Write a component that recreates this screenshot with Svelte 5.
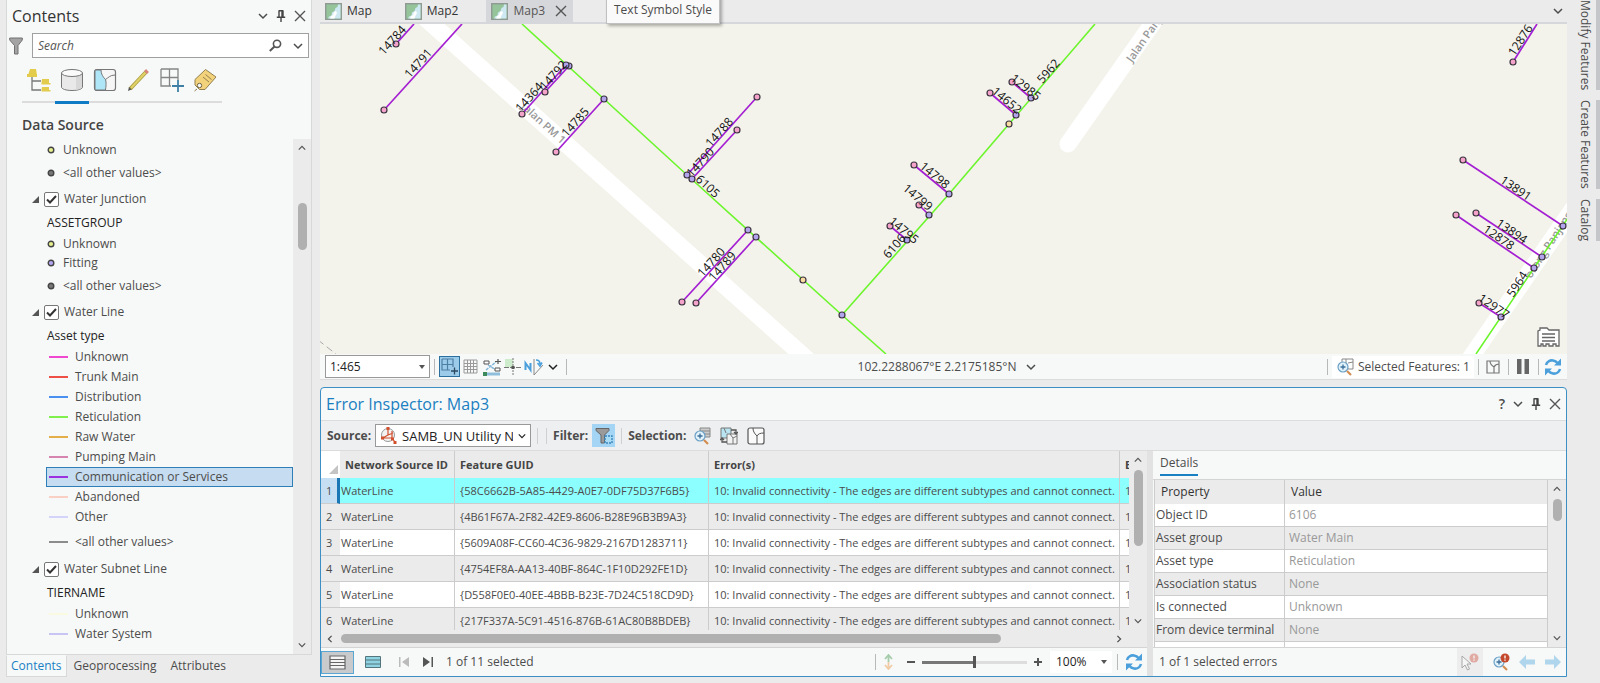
<script>
    let search = '';
    let activeTab = 'Map3';
    let activePane = 'Contents';
    let selectedRow = 1;
    let zoom = 50;

    const mapTabs = ['Map', 'Map2', 'Map3'];
    const paneTabs = ['Contents', 'Geoprocessing', 'Attributes'];
    const sideTabs = ['Modify Features', 'Create Features', 'Catalog'];

    let legend = [
        { type: 'point', label: 'Unknown', color: '#e6f08c' },
        { type: 'point', label: '<all other values>', color: '#777777', other: true },
        { type: 'layer', label: 'Water Junction', checked: true },
        { type: 'field', label: 'ASSETGROUP' },
        { type: 'point', label: 'Unknown', color: '#e6f08c' },
        { type: 'point', label: 'Fitting', color: '#b4a5f0' },
        { type: 'point', label: '<all other values>', color: '#777777', other: true },
        { type: 'layer', label: 'Water Line', checked: true },
        { type: 'field', label: 'Asset type' },
        { type: 'line', label: 'Unknown', color: '#f048d0' },
        { type: 'line', label: 'Trunk Main', color: '#ee5048' },
        { type: 'line', label: 'Distribution', color: '#4a90f0' },
        { type: 'line', label: 'Reticulation', color: '#80f04c' },
        { type: 'line', label: 'Raw Water', color: '#e4ae48' },
        { type: 'line', label: 'Pumping Main', color: '#d684b0' },
        { type: 'line', label: 'Communication or Services', color: '#9c30e0', selected: true },
        { type: 'line', label: 'Abandoned', color: '#fad0c4' },
        { type: 'line', label: 'Other', color: '#d4d4fa' },
        { type: 'line', label: '<all other values>', color: '#8c8c8c', other: true },
        { type: 'layer', label: 'Water Subnet Line', checked: true },
        { type: 'field', label: 'TIERNAME' },
        { type: 'line', label: 'Unknown', color: '#fafae0' },
        { type: 'line', label: 'Water System', color: '#c8c4f4' }
    ];

    const message = '10: Invalid connectivity - The edges are different subtypes and cannot connect.';
    const errors = [
        '{58C6662B-5A85-4429-A0E7-0DF75D37F6B5}',
        '{4B61F67A-2F82-42E9-8606-B28E96B3B9A3}',
        '{5609A08F-CC60-4C36-9829-2167D1283711}',
        '{4754EF8A-AA13-40BF-864C-1F10D292FE1D}',
        '{D558F0E0-40EE-4BBB-B23E-7D24C518CD9D}',
        '{217F337A-5C91-4516-876B-61AC80B8BDEB}'
    ];

    const details = [
        ['Object ID', '6106'],
        ['Asset group', 'Water Main'],
        ['Asset type', 'Reticulation'],
        ['Association status', 'None'],
        ['Is connected', 'Unknown'],
        ['From device terminal', 'None'],
        ['', '']
    ];

    // service lines: x1, y1, x2, y2
    const services = [
        [414, 24, 396, 44], [462, 24, 384, 110],
        [566, 65, 522, 114], [569, 66, 545, 92], [604, 99, 556, 152],
        [687, 175, 757, 97], [692, 179, 737, 130],
        [748, 230, 682, 302], [756, 237, 696, 303],
        [1012, 82, 1031, 98], [990, 93, 1016, 115],
        [914, 165, 949, 194], [919, 205, 929, 215], [890, 226, 907, 240],
        [1537, 24, 1513, 62], [1463, 160, 1563, 226],
        [1476, 213, 1542, 257], [1456, 215, 1534, 268], [1479, 303, 1501, 317]
    ];

    const meters = [
        [396, 44], [384, 110], [522, 114], [545, 92], [556, 152], [757, 97], [737, 130],
        [682, 302], [696, 303], [1012, 82], [990, 93], [914, 165], [919, 205], [890, 226],
        [1513, 62], [1463, 160], [1476, 213], [1456, 215], [1479, 303]
    ];
    const fittings = [
        [569, 66], [566, 65], [604, 99], [687, 175], [692, 179], [748, 230], [756, 237], [842, 315],
        [1031, 98], [1016, 115], [949, 194], [929, 215], [907, 240],
        [1563, 226], [1542, 257], [1534, 268], [1501, 317]
    ];
    const valves = [[803, 280], [1009, 124]];

    // text, centre x, centre y, angle
    const mapLabels = [
        ['14784', 392, 40, -48], ['14791', 418, 63, -48], ['14792', 553, 75, -48],
        ['14364', 529, 97, -48], ['14785', 575, 122, -48], ['14788', 719, 132, -48],
        ['14790', 700, 162, -48], ['6105', 708, 186, 42], ['14780', 711, 262, -48],
        ['14789', 722, 266, -48], ['5962', 1048, 71, -49], ['12985', 1026, 87, 38],
        ['14652', 1007, 100, 40], ['14798', 935, 175, 40], ['14799', 918, 197, 40],
        ['14795', 904, 230, 40], ['6106', 894, 246, -49], ['12876', 1520, 40, -57],
        ['13891', 1516, 188, 34], ['13894', 1512, 231, 34], ['12878', 1499, 237, 34],
        ['5964', 1517, 284, -57], ['12977', 1494, 306, 34]
    ];
</script>

{#snippet chevron(dir)}
    <svg class="chevron {dir}" width="10" height="10" viewBox="0 0 10 10" aria-hidden="true"><path d="M1 3l4 4 4-4" fill="none" stroke="currentColor" stroke-width="1.5" /></svg>
{/snippet}

{#snippet pin()}
    <svg width="10" height="12" viewBox="0 0 10 12" aria-hidden="true"><path d="M2.5 .8h5M3 1v6M7 1v6M6 1v6M.8 7.2h8.4M5 7.5V12" fill="none" stroke="#444" stroke-width="1.4" /></svg>
{/snippet}

{#snippet cross()}
    <svg width="12" height="12" viewBox="0 0 12 12" aria-hidden="true"><path d="M1 1l10 10M11 1L1 11" fill="none" stroke="#555" stroke-width="1.4" /></svg>
{/snippet}

{#snippet refresh()}
    <svg width="18" height="18" viewBox="0 0 18 18" aria-hidden="true">
        <path d="M2 7c1-3.500 4-5 7-4.500 2 .3 3.500 1.200 4.500 2.500M16 11c-1 3.500-4 5-7 4.500-2-.3-3.500-1.200-4.500-2.500" fill="none" stroke="#4ba0dc" stroke-width="2.600" />
        <path d="M17 .5v7h-7zM1 17.500v-7h7z" fill="#4ba0dc" />
    </svg>
{/snippet}

{#snippet parcel()}
    <svg width="18" height="18" viewBox="0 0 18 18" aria-hidden="true"><rect x="1" y="1" width="16" height="16" rx="2" fill="#fafafa" stroke="#555" stroke-width="1.200" /><path d="M6 1c0 3 1 5 4 8v8M10 9c1-2 3-3 7-3" fill="none" stroke="#555" /></svg>
{/snippet}

{#snippet mapIcon()}
    <svg width="17" height="17" viewBox="0 0 17 17" aria-hidden="true">
        <rect x=".7" y=".7" width="15.600" height="15.600" fill="#95c49b" stroke="#8f9a94" stroke-width="1.400" />
        <path d="M13 1.500h2.500v14H3l1-2 2.500-1 .5-3 2.500-1.500 1-3 2-1z" fill="#cfe9f2" />
        <path d="M5 15.500l1-2.500 2-1 1-3 2-1 1 2-1.500 2.500-1 3z" fill="#fff" />
    </svg>
{/snippet}

{#snippet magnifier()}
    <circle cx="7" cy="9" r="5" fill="#e2f2fb" stroke="#6ba0c6" stroke-width="1.200" />
    <path d="M4.500 9h5M7 6.500v5" stroke="#3c6f99" stroke-width="1.300" />
    <path d="M11 13l4 4" stroke="#d38d50" stroke-width="2.200" />
{/snippet}

<div class="workspace">
    <div class="dock">
        <section class="contents" aria-label="Contents">
            <header class="pane-title">
                <h1>Contents</h1>
                <button class="plain" aria-label="Pane options">{@render chevron('down')}</button>
                <button class="plain" aria-label="Auto hide">{@render pin()}</button>
                <button class="plain" aria-label="Close">{@render cross()}</button>
            </header>

            <div class="search-row">
                <button class="plain" aria-label="Filter">
                    <svg width="14" height="18" viewBox="0 0 14 18"><path d="M.7 1h12.600v2L9 8.500V17H5.500V8.500L.7 3z" fill="#a4a4a4" stroke="#707070" /></svg>
                </button>
                <div class="search-box">
                    <input type="text" placeholder="Search" aria-label="Search" bind:value={search} />
                    <button class="plain" aria-label="Find">
                        <svg width="13" height="13" viewBox="0 0 13 13"><circle cx="8" cy="4.800" r="3.600" fill="none" stroke="#555" stroke-width="1.600" /><path d="M5.500 7.500L.8 12" stroke="#555" stroke-width="2" /></svg>
                    </button>
                    <button class="plain" aria-label="Search options">{@render chevron('down')}</button>
                </div>
            </div>

            <div class="views">
                <button class="view" aria-label="List by drawing order">
                    <svg width="24" height="24" viewBox="0 0 24 24"><path d="M5 9v13h9M5 13h9" fill="none" stroke="#777" stroke-width="1.300" /><path d="M3 1h6l1 6.500H1zM0 6h10v3H0zM15 11h7v4h1.500v1.500h-9V15zM15 19h7v3h1.500v1.500h-9V22z" fill="#e3cc4c" /></svg>
                </button>
                <button class="view current" aria-label="List by data source">
                    <svg width="24" height="24" viewBox="0 0 24 24"><path d="M1.500 5v14c0 2 4.500 3.500 10.500 3.500S22.500 21 22.500 19V5z" fill="#e9e9e9" stroke="#777" /><path d="M16 8l6-2v13c-1 1.500-3 2.500-6 3z" fill="#d8d8d8" /><ellipse cx="12" cy="5" rx="10.500" ry="3.500" fill="#fafafa" stroke="#777" /></svg>
                </button>
                <button class="view" aria-label="List by selection">
                    <svg width="24" height="24" viewBox="0 0 24 24"><rect x="1.500" y="1.500" width="21" height="21" rx="2.500" fill="#f6f6f6" stroke="#777" stroke-width="1.200" /><path d="M2 2h6c0 4 2 7 4.500 9.500 1 3 .5 7 0 10.500H2z" fill="#aee6f7" stroke="#777" /><path d="M12.500 11.500C15 10 17 7 22 7" fill="none" stroke="#777" /></svg>
                </button>
                <button class="view" aria-label="List by editing">
                    <svg width="24" height="24" viewBox="0 0 24 24"><path d="M3 21L19 4" stroke="#a99c43" stroke-width="4" /><path d="M4 20L18.500 4.500" stroke="#dfd165" stroke-width="2.400" /><path d="M18.500 4.500l2-2" stroke="#d8867d" stroke-width="4" /><path d="M1 23l1-4 2.500 2.500z" fill="#555" /></svg>
                </button>
                <button class="view" aria-label="List by snapping">
                    <svg width="24" height="24" viewBox="0 0 24 24"><path d="M1 1h17v11M1 1v17h10M9.500 1v17M1 9.500h17M11 18" fill="none" stroke="#858585" stroke-width="1.300" /><path d="M12 18h12M18 12v12" stroke="#3f7fa6" stroke-width="1.800" /></svg>
                </button>
                <button class="view" aria-label="List by labeling">
                    <svg width="24" height="24" viewBox="0 0 24 24"><path d="M12.500 1.500L23 9 12 21.500H6.500L2 17v-5.500z" fill="#f3d27c" stroke="#92804e" /><circle cx="6.500" cy="17.500" r="2.200" fill="#f7f9f8" stroke="#6e6244" /><path d="M4 21l-2.500 2M10 9l6 5M12.500 6.500l6 5" fill="none" stroke="#92804e" /></svg>
                </button>
            </div>

            <h2>Data Source</h2>

            <div class="tree">
                <ul class="legend">
                    {#each legend as item}
                        <li class={item.type} class:other={item.other} class:selected={item.selected}>
                            {#if item.type === 'layer'}
                                <svg class="twisty" width="7" height="7" viewBox="0 0 7 7" aria-hidden="true"><path d="M7 0v7H0z" fill="#555" /></svg>
                                <label><input type="checkbox" bind:checked={item.checked} />{item.label}</label>
                            {:else if item.type === 'point'}
                                <svg width="8" height="8" viewBox="0 0 8 8" aria-hidden="true"><circle cx="4" cy="4" r="2.800" fill={item.color} stroke="#444" stroke-width="1.400" /></svg>
                                <span>{item.label}</span>
                            {:else if item.type === 'line'}
                                <svg width="19" height="4" viewBox="0 0 19 4" aria-hidden="true"><path d="M0 2h19" stroke={item.color} stroke-width="2" /></svg>
                                <span>{item.label}</span>
                            {:else}
                                <span>{item.label}</span>
                            {/if}
                        </li>
                    {/each}
                </ul>
                <div class="vscroll tree-scroll">
                    {@render chevron('up')}
                    <div class="track"><div class="thumb"></div></div>
                    {@render chevron('down')}
                </div>
            </div>
        </section>

        <nav class="pane-tabs">
            {#each paneTabs as tab}
                <button class:active={tab === activePane} onclick={() => (activePane = tab)}>{tab}</button>
            {/each}
        </nav>
    </div>

    <main>
        <div class="map-tabs">
            {#each mapTabs as tab}
                <button class="map-tab" class:active={tab === activeTab} onclick={() => (activeTab = tab)}>
                    {@render mapIcon()}
                    <span>{tab}</span>
                    {#if tab === activeTab}{@render cross()}{/if}
                </button>
            {/each}
            <button class="plain tab-menu" aria-label="All views">{@render chevron('down')}</button>
            <div class="tooltip" role="tooltip">Text Symbol Style</div>
        </div>

        <div class="map">
            <svg class="canvas" viewBox="320 24 1247 330" preserveAspectRatio="xMinYMin slice" role="img" aria-label="Map3">
                <g stroke="#fff" stroke-width="17" stroke-linecap="round">
                    <path d="M405 0L828 378" />
                    <path d="M1068 144L1162 10" />
                    <path d="M1460 373L1590 184" />
                </g>
                <path d="M318 340l18 14" stroke="#aaa" stroke-dasharray="7 4" />
                <g class="street">
                    <text transform="translate(541 126) rotate(42)" text-anchor="middle">Jalan PM 1</text>
                    <text transform="translate(1132 63) rotate(-55)">Jalan Panjang</text>
                    <text transform="translate(1531 279) rotate(-57)">orong Panjang</text>
                </g>
                <g fill="none" stroke="#6cf52c" stroke-width="1.600">
                    <path d="M522 24L687 175 842 315 886 354" />
                    <path d="M842 315L949 194 1009 124 1095 24" />
                    <path d="M1476 354L1534 268 1570 215" />
                </g>
                {#each services as [x1, y1, x2, y2]}
                    <line {x1} {y1} {x2} {y2} stroke="#a41ed2" stroke-width="1.700" />
                {/each}
                <g stroke="#3c3440" stroke-width="1.200">
                    {#each meters as [cx, cy]}<circle {cx} {cy} r="3" fill="#f5a3cb" />{/each}
                    {#each fittings as [cx, cy]}<circle {cx} {cy} r="3" fill="#b3a4ee" />{/each}
                    {#each valves as [cx, cy]}<circle {cx} {cy} r="3" fill="#f9dca0" />{/each}
                </g>
                <g class="asset">
                    {#each mapLabels as [text, x, y, angle]}
                        <text transform="translate({x} {y}) rotate({angle})" text-anchor="middle" dominant-baseline="central">{text}</text>
                    {/each}
                </g>
            </svg>
            <button class="plain map-log" aria-label="Map notifications">
                <svg width="23" height="20" viewBox="0 0 23 20"><path d="M1 19V4l2-1V1h7l2 2h10v16h-3v-2h-3v2h-4v-2H9v2H6v-2H4v2z" fill="#fff" stroke="#666" stroke-width="1.300" /><path d="M5 7h13M5 10.500h13M5 14h13" stroke="#666" stroke-width="1.300" /></svg>
            </button>
        </div>

        <div class="map-bar">
            <div class="select scale">
                <select aria-label="Map scale"><option>1:465</option><option>1:1,000</option></select>
                <span class="caret"></span>
            </div>
            <i class="sep"></i>
            <div class="tools">
                <button class="tool on" aria-label="Snapping">
                    <svg width="17" height="17" viewBox="0 0 17 17"><path d="M1 1h11v8M1 1v11h8M6.500 1v11M1 6.500h11" fill="none" stroke="#4d7fa3" stroke-width="1.200" /><path d="M10 13h7M13.500 9.500v7" stroke="#2c4a60" stroke-width="1.300" /></svg>
                </button>
                <button class="tool" aria-label="Grid">
                    <svg width="15" height="15" viewBox="0 0 15 15"><path d="M1 1h13v13H1zM4.500 1v13M7.500 1v13M10.500 1v13M1 4.500h13M1 7.500h13M1 10.500h13" fill="none" stroke="#999" /></svg>
                </button>
                <button class="tool" aria-label="Constraints">
                    <svg width="18" height="18" viewBox="0 0 18 18"><path d="M2 16h15" stroke="#8fbedd" stroke-width="3" /><path d="M3 12L13 4M5 7l8 5" stroke="#7fb4d8" stroke-width="1.400" stroke-dasharray="3 1" /><path d="M1 3h5v3H1zM12 10h5v3h-5z" fill="#fff" stroke="#555" /><path d="M15 1v5M12 3.500h6" stroke="#555" stroke-width="1.200" /><path d="M0 14h4v4H0z" fill="#3f8a5a" /></svg>
                </button>
                <button class="tool" aria-label="Inference">
                    <svg width="18" height="18" viewBox="0 0 18 18"><path d="M1 1h8v8H1z" fill="#cdeccb" /><path d="M9 0v18" stroke="#777" stroke-dasharray="2 1" /><path d="M0 9.500h18" stroke="#777" stroke-dasharray="5 1" /><path d="M7.500 8h3v3h-3z" fill="#555" /></svg>
                </button>
                <button class="tool" aria-label="Ground to grid">
                    <svg width="19" height="18" viewBox="0 0 19 18"><path d="M1.500 12V5l5 7V5" fill="none" stroke="#4ba0dc" stroke-width="2" /><path d="M10 1v16l9-10" fill="none" stroke="#888" /><path d="M12 2c2 0 4 1 4 4M13.500 5l2.500 3 2-3.500" fill="none" stroke="#4ba0dc" stroke-width="1.600" /></svg>
                </button>
                <button class="plain dark" aria-label="More tools">{@render chevron('down')}</button>
            </div>
            <i class="sep"></i>
            <button class="plain coords">102.2288067°E 2.2175185°N {@render chevron('down')}</button>
            <i class="sep"></i>
            <button class="plain picked">
                <svg width="18" height="18" viewBox="0 0 18 18" aria-hidden="true"><path d="M6 1h11v10H6zM10 1v5l2 5M12 5l5-1" fill="#fff" stroke="#888" />{@render magnifier()}</svg>
                Selected Features: 1
            </button>
            <i class="sep"></i>
            <button class="tool" aria-label="Zoom to selection"><svg width="14" height="14" viewBox="0 0 14 14"><path d="M1 1h12v12H1zM4 1c0 2 1 4 4 6v6M8 7c1-2 2-3 5-3" fill="none" stroke="#777" stroke-width="1.200" /></svg></button>
            <i class="sep"></i>
            <button class="tool" aria-label="Pause drawing"><svg width="12" height="15" viewBox="0 0 12 15"><path d="M0 0h4.500v15H0zM7.500 0H12v15H7.500z" fill="#666" /></svg></button>
            <i class="sep"></i>
            <button class="tool" aria-label="Refresh map">{@render refresh()}</button>
        </div>

        <section class="inspector" aria-label="Error Inspector">
            <header class="pane-title">
                <h1>Error Inspector: Map3</h1>
                <button class="plain help" aria-label="Help">?</button>
                <button class="plain" aria-label="Pane options">{@render chevron('down')}</button>
                <button class="plain" aria-label="Auto hide">{@render pin()}</button>
                <button class="plain" aria-label="Close">{@render cross()}</button>
            </header>

            <div class="toolbar">
                <label for="source">Source:</label>
                <div class="select source">
                    <svg width="17" height="17" viewBox="0 0 17 17" aria-hidden="true"><circle cx="8" cy="8" r="6.500" fill="#f2f2f2" stroke="#999" /><path d="M8 2v6L3 11h9l3 4M8 8l5-2M12 4v8" fill="none" stroke="#d2502e" stroke-width="1.200" /><path d="M6.500 0h3v3h-3zM1 9.500h3v3H1zM11 10.500h3v3h-3zM13.500 14h3v3h-3z" fill="#d2502e" /></svg>
                    <select id="source"><option>SAMB_UN Utility N</option></select>
                    {@render chevron('down')}
                </div>
                <i class="sep"></i>
                <i class="sep"></i>
                <b>Filter:</b>
                <button class="tool lit" aria-label="Filter by extent">
                    <svg width="18" height="18" viewBox="0 0 18 18"><path d="M1 1.500h13v2L9.500 8v8H6V8L1 3.500z" fill="#9a9a9a" stroke="#666" /><path d="M10 9h7v7h-7z" fill="#a8dcf5" stroke="#3c87bd" stroke-width="1.400" stroke-dasharray="2 1" /></svg>
                </button>
                <i class="sep"></i>
                <b>Selection:</b>
                <button class="tool" aria-label="Zoom to"><svg width="18" height="18" viewBox="0 0 18 18"><path d="M7 1h10v9H7zM7 4h10M7 7h10" fill="#ccc" stroke="#888" />{@render magnifier()}</svg></button>
                <button class="tool" aria-label="Switch selection"><svg width="18" height="18" viewBox="0 0 18 18"><path d="M1 1h10v10H1z" fill="#b9e4f2" stroke="#777" /><path d="M7 7h10v10H7zM10 7l3 4v6M13 11l4-2M4 1l2 5" fill="#f2f2f2" stroke="#777" /><path d="M11 3h5v4M14 5l2 2 2-2M7 15H2v-4M0 13l2-2 2 2" fill="none" stroke="#555" stroke-width="1.300" /></svg></button>
                <button class="tool" aria-label="Clear selection">{@render parcel()}</button>
            </div>

            <div class="panes">
                <div class="errors">
                    <div class="grid-area">
                        <div class="grid-clip">
                            <table class="error-table">
                                <thead>
                                    <tr>
                                        <th class="corner"><svg width="9" height="9" viewBox="0 0 9 9" aria-hidden="true"><path d="M9 0v9H0z" fill="#c4c4c4" /></svg></th>
                                        <th class="source-id">Network Source ID</th>
                                        <th class="guid">Feature GUID</th>
                                        <th class="message">Error(s)</th>
                                        <th class="code">E</th>
                                    </tr>
                                </thead>
                                <tbody>
                                    {#each errors as guid, i}
                                        <tr class:selected={selectedRow === i + 1} onclick={() => (selectedRow = i + 1)}>
                                            <td class="num">{i + 1}</td>
                                            <td class="source-id">WaterLine</td>
                                            <td class="guid">{guid}</td>
                                            <td class="message">{message}</td>
                                            <td class="code">1</td>
                                        </tr>
                                    {/each}
                                </tbody>
                            </table>
                        </div>
                        <div class="vscroll grid-scroll">
                            {@render chevron('up')}
                            <div class="track"><div class="thumb"></div></div>
                            {@render chevron('down')}
                        </div>
                    </div>
                    <div class="hscroll">
                        {@render chevron('left')}
                        <div class="htrack"><div class="hthumb"></div></div>
                        {@render chevron('right')}
                    </div>
                    <footer>
                        <button class="show-all" aria-label="Show all records"><svg width="17" height="15" viewBox="0 0 17 15"><path d="M1 1h15v13H1zM1 4.500h15M1 7.500h15M1 10.500h15" fill="#f4f4f4" stroke="#666" stroke-width="1.200" /></svg></button>
                        <button class="plain show-selected" aria-label="Show selected records"><svg width="16" height="12" viewBox="0 0 16 12"><path d="M.5 .5h15v11H.5zM.5 4h15M.5 8h15" fill="#8ed3e2" stroke="#55757c" /></svg></button>
                        <button class="plain first" aria-label="First record"><svg width="10" height="10" viewBox="0 0 10 10"><path d="M0 0h1.500v10H0zM10 0v10L3 5z" fill="#bbb" /></svg></button>
                        <button class="plain" aria-label="Last record"><svg width="10" height="10" viewBox="0 0 10 10"><path d="M8.500 0H10v10H8.500zM0 0v10l7-5z" fill="#555" /></svg></button>
                        <span class="count">1 of 11 selected</span>
                        <i class="sep"></i>
                        <svg class="fit" width="9" height="16" viewBox="0 0 9 16" aria-hidden="true"><path d="M4.500 2v6M1 5l3.500-4L8 5" fill="none" stroke="#a5ccab" stroke-width="1.800" /><path d="M4.500 8v6M1 11l3.500 4L8 11" fill="none" stroke="#f0cba6" stroke-width="1.800" /></svg>
                        <button class="plain" aria-label="Zoom out"><svg width="8" height="8" viewBox="0 0 8 8"><path d="M0 4h8" stroke="#555" stroke-width="2" /></svg></button>
                        <input type="range" min="0" max="100" bind:value={zoom} aria-label="Table zoom" style="--fill: {zoom}%" />
                        <button class="plain" aria-label="Zoom in"><svg width="8" height="8" viewBox="0 0 8 8"><path d="M0 4h8M4 0v8" stroke="#555" stroke-width="2" /></svg></button>
                        <div class="select percent">
                            <select aria-label="Zoom percent"><option>100%</option></select>
                            <span class="caret"></span>
                        </div>
                        <i class="sep"></i>
                        <button class="tool" aria-label="Refresh table">{@render refresh()}</button>
                    </footer>
                </div>

                <div class="details">
                    <div class="detail-tabs"><button>Details</button></div>
                    <div class="detail-area">
                        <div class="detail-clip">
                            <table class="detail-table">
                                <thead>
                                    <tr><th>Property</th><th>Value</th></tr>
                                </thead>
                                <tbody>
                                    {#each details as [name, value]}
                                        <tr><td>{name}</td><td>{value}</td></tr>
                                    {/each}
                                </tbody>
                            </table>
                        </div>
                        <div class="vscroll detail-scroll">
                            {@render chevron('up')}
                            <div class="track"><div class="thumb"></div></div>
                            {@render chevron('down')}
                        </div>
                    </div>
                    <footer>
                        <span class="count">1 of 1 selected errors</span>
                        <button class="nav-tool muted" aria-label="Select errors"><svg width="18" height="18" viewBox="0 0 18 18"><path d="M1 3v12l3-3 2.500 5 2-1-2.500-5h4z" fill="#fff" stroke="#555" /><circle cx="13" cy="5" r="4.500" fill="#d25848" /><path d="M13 2.500v3M13 6.500v1.200" stroke="#fff" stroke-width="1.300" /></svg></button>
                        <button class="nav-tool" aria-label="Zoom to errors"><svg width="18" height="18" viewBox="0 0 18 18">{@render magnifier()}<circle cx="13" cy="5" r="4.500" fill="#c4482c" /><path d="M13 2.500v3M13 6.500v1.200" stroke="#fff" stroke-width="1.300" /></svg></button>
                        <button class="nav-tool" aria-label="Previous"><svg width="16" height="14" viewBox="0 0 16 14"><path d="M0 7l7-7v4.500h9v5H7V14z" fill="#b0d6ee" /></svg></button>
                        <button class="nav-tool" aria-label="Next"><svg width="16" height="14" viewBox="0 0 16 14"><path d="M16 7L9 0v4.500H0v5h9V14z" fill="#b0d6ee" /></svg></button>
                    </footer>
                </div>
            </div>
        </section>
    </main>

    <nav class="side">
        {#each sideTabs as tab}
            <button>{tab}</button>
        {/each}
    </nav>
</div>

<style>
    :global(body) {
        margin: 0;
        background: #ebebeb;
        overflow: hidden;
    }

    .workspace {
        display: grid;
        grid-template-columns: 306px 1fr 33px;
        height: 100vh;
        box-sizing: border-box;
        padding: 0 0 6px 6px;
        font-family: "Open Sans", "Noto Sans", sans-serif;
        font-size: 12px;
        line-height: 16px;
        color: #4c4c4c;
    }

    .workspace * {
        box-sizing: border-box;
    }

    button, input, select {
        font: inherit;
        color: inherit;
        margin: 0;
    }

    button {
        border: 0;
        padding: 0;
        background: none;
        display: flex;
        align-items: center;
    }

    svg { flex: none; }
    h1, h2 { margin: 0; }

    .chevron.up { transform: rotate(180deg); }
    .chevron.left { transform: rotate(90deg); }
    .chevron.right { transform: rotate(-90deg); }

    .sep {
        width: 1px;
        height: 16px;
        flex: none;
        background: #b8b8b8;
    }

    .pane-title {
        display: flex;
        align-items: center;
        gap: 8px;
        height: 32px;
        padding: 0 5px;
    }

    .pane-title h1 {
        flex: 1;
        font-size: 16px;
        line-height: 22px;
        font-weight: 400;
    }

    /* contents pane */
    .dock {
        display: flex;
        flex-direction: column;
        min-height: 0;
    }

    .contents {
        flex: 1;
        min-height: 0;
        display: flex;
        flex-direction: column;
        background: #f7f9f8;
        border: 1px solid #d8d8d8;
        border-top: 0;
    }

    .contents h1 { color: #333; }

    .search-row {
        display: flex;
        align-items: center;
        gap: 9px;
        padding: 1px 2px 0;
    }

    .search-box {
        flex: 1;
        display: flex;
        align-items: center;
        gap: 11px;
        height: 25px;
        padding: 0 5px;
        background: #fff;
        border: 1px solid #a0a0a0;
    }

    .search-box input {
        flex: 1;
        min-width: 0;
        border: 0;
        padding: 0;
        outline: 0;
        font-style: italic;
    }

    .search-box input::placeholder { color: #555; }

    .views {
        display: flex;
        width: 200px;
        height: 41px;
        margin: 4px 0 0 15px;
        border-bottom: 2px solid #dcdcdc;
    }

    .view {
        width: 34px;
        height: 42px;
        padding-bottom: 4px;
        justify-content: center;
        border-bottom: 3px solid transparent;
    }

    .view.current { border-bottom-color: #0f7bc4; }

    h2 {
        margin: 13px 0 5px 15px;
        font-size: 14px;
        line-height: 18px;
        font-weight: 600;
        color: #444;
    }

    .tree {
        flex: 1;
        min-height: 0;
        display: flex;
    }

    .legend {
        flex: 1;
        min-width: 0;
        margin: 0;
        padding: 1px 0 0 0;
        list-style: none;
        overflow: hidden;
    }

    .legend li {
        display: flex;
        align-items: center;
        height: 20px;
        white-space: nowrap;
    }

    .legend .point {
        height: 19px;
        gap: 8px;
        padding-left: 40px;
    }

    .legend .point.other { height: 28px; }

    .legend .line {
        gap: 7px;
        margin-left: 39px;
        padding-left: 2px;
        border: 1px solid transparent;
    }

    .legend .line.other { height: 30px; }

    .legend .line.selected {
        background: #c6dcf0;
        border-color: #2e7fb8;
    }

    .legend .layer {
        height: 24px;
        padding-left: 25px;
        gap: 5px;
    }

    .legend .layer label {
        display: flex;
        align-items: center;
        gap: 5px;
    }

    .legend .field {
        height: 23px;
        padding-left: 40px;
        color: #222;
    }

    input[type='checkbox'] {
        appearance: none;
        width: 15px;
        height: 15px;
        border: 1px solid #777;
        border-radius: 2px;
        background: #fff;
    }

    input[type='checkbox']:checked {
        background: #fff url("data:image/svg+xml,%3Csvg xmlns='http://www.w3.org/2000/svg' viewBox='0 0 13 13'%3E%3Cpath d='M2 6.500l3 3 6-6.500' fill='none' stroke='%23333' stroke-width='2'/%3E%3C/svg%3E");
    }

    .vscroll {
        width: 18px;
        flex: none;
        display: flex;
        flex-direction: column;
        align-items: center;
        justify-content: space-between;
        padding: 5px 0;
        background: #ebebeb;
        color: #555;
    }

    .vscroll .chevron, .hscroll .chevron {
        width: 8px;
        height: 8px;
    }

    .vscroll .track { flex: 1; }

    .thumb {
        width: 9px;
        border-radius: 5px;
        background: #b0b0b0;
    }

    .tree-scroll .thumb {
        height: 47px;
        margin-top: 51px;
    }

    .pane-tabs {
        display: flex;
        height: 22px;
    }

    .pane-tabs button {
        padding: 0 6px;
        border: 1px solid transparent;
    }

    .pane-tabs .active {
        padding: 0 4px;
        background: #f7f9f8;
        border-color: #d8d8d8;
        border-top-color: #f7f9f8;
        color: #1a80c4;
    }

    /* map view */
    main {
        display: flex;
        flex-direction: column;
        min-width: 0;
        min-height: 0;
        margin-left: 8px;
    }

    .map-tabs {
        position: relative;
        display: flex;
        height: 24px;
        flex: none;
        border-bottom: 2px solid #d5d7da;
    }

    .map-tab {
        gap: 5px;
        padding: 0 28px 0 5px;
        color: #333;
    }

    .map-tab.active {
        padding-right: 6px;
        background: #d5d7da;
        color: #555;
    }

    .map-tab.active span { margin-right: 5px; }

    .tab-menu { margin: 0 4px 0 auto; }

    .tooltip {
        position: absolute;
        top: -5px;
        left: 286px;
        padding: 6px 7px 5px;
        background: #fafafa;
        border: 1px solid #c0c0c0;
        box-shadow: 2px 2px 3px rgba(0, 0, 0, 0.3);
        z-index: 1;
        white-space: nowrap;
    }

    .map {
        position: relative;
        flex: 1;
        min-height: 0;
        background: #f3f3eb;
        overflow: hidden;
    }

    .canvas {
        display: block;
        width: 100%;
        height: 100%;
    }

    .asset {
        font-size: 12px;
        fill: #111;
    }

    .street {
        font-size: 11px;
        font-weight: 600;
        fill: #999;
    }

    .map-log {
        position: absolute;
        right: 7px;
        bottom: 7px;
    }

    .map-bar {
        display: flex;
        align-items: center;
        flex: none;
        height: 26px;
        padding: 0 3px 0 5px;
        background: #f7f9f8;
        border-bottom: 1px solid #dcdcdc;
    }

    .select {
        display: flex;
        align-items: center;
        background: #fff;
        color: #222;
    }

    .select select {
        flex: 1;
        min-width: 0;
        appearance: none;
        border: 0;
        padding: 0;
        background: none;
    }

    .caret {
        border: 3px solid transparent;
        border-top: 4px solid #555;
        border-bottom: 0;
    }

    .scale {
        width: 105px;
        height: 23px;
        padding: 0 4px;
        margin-right: 4px;
        border: 1px solid #999;
    }

    .tools {
        display: flex;
        align-items: center;
        margin: 0 8px 0 4px;
    }

    .tool {
        width: 21px;
        height: 21px;
        justify-content: center;
    }

    .tool.on {
        background: #9ccbea;
        border: 1px solid #2b6f9f;
    }

    .dark { margin-left: 4px; color: #222; }

    .coords {
        gap: 10px;
        margin: 0 auto;
    }

    .picked {
        gap: 4px;
        height: 22px;
        margin: 0 4px;
        padding: 0 4px;
        background: #fff;
    }

    .map-bar > .tool { margin: 0 4px; }
    .map-bar > .tool:last-child { margin-right: 0; }

    /* error inspector */
    .inspector {
        flex: none;
        margin-top: 7px;
        background: #f7f9f8;
        border: 1px solid #3b8fc4;
        border-radius: 4px 4px 0 0;
    }

    .inspector h1 { color: #1a7fc1; }

    .inspector .help {
        font-size: 14px;
        font-weight: 600;
    }

    .toolbar {
        display: flex;
        align-items: center;
        gap: 4px;
        height: 31px;
        padding: 0 6px;
        background: #eeeff0;
        border: 1px solid #dcdcdc;
        border-width: 1px 0;
    }

    .toolbar label, .toolbar b { font-weight: 700; }
    .toolbar .sep { margin: 0 2px; background: #d0d0d0; }

    .source {
        width: 156px;
        height: 23px;
        gap: 5px;
        padding: 0 4px;
        border: 1px solid #999;
        font-size: 13px;
    }

    .source .chevron { width: 8px; height: 8px; }

    .toolbar .tool {
        width: 23px;
        height: 23px;
    }

    .toolbar .lit { background: #a4d5f4; }

    .panes {
        display: flex;
        height: 225px;
    }

    .errors {
        flex: 1;
        min-width: 0;
        display: flex;
        flex-direction: column;
        border-right: 6px solid #e2e2e2;
    }

    .grid-area {
        flex: 1;
        min-height: 0;
        display: flex;
        background: #ebebeb;
    }

    .grid-clip {
        flex: 1;
        min-width: 0;
        overflow: hidden;
    }

    table {
        border-collapse: separate;
        border-spacing: 0;
        table-layout: fixed;
    }

    th, td {
        text-align: left;
        white-space: nowrap;
        overflow: hidden;
        border: 0 solid #ccc;
    }

    .error-table {
        width: 900px;
        font-size: 11px;
    }

    .error-table th {
        height: 27px;
        padding: 0 0 0 5px;
        background: #ebebeb;
        border-right-width: 1px;
        font-weight: 700;
        color: #444;
    }

    .error-table td {
        height: 26px;
        padding: 0 0 0 5px;
        background: #fff;
        border-width: 0 1px 1px 0;
    }

    .error-table .corner {
        width: 19px;
        padding: 10px 2px 0 0;
        background: #fff;
        text-align: right;
        border: 0;
    }

    .error-table .source-id { width: 115px; }
    .error-table td.source-id { padding-left: 1px; }
    .error-table .guid { width: 254px; }
    .error-table .message { width: 411px; }

    .error-table tr:nth-child(even) td { background: #ebebeb; }

    .error-table td.num {
        padding-left: 5px;
        background: #ebebeb;
        border-right: 0;
    }

    .error-table tr.selected td { background: #8cffff; }

    .error-table tr.selected td.num {
        background: #c6dff3;
        border-right: 3px solid #1a76b5;
    }

    .grid-scroll .thumb { height: 76px; margin-top: 6px; }

    .hscroll {
        display: flex;
        align-items: center;
        height: 18px;
        padding: 0 24px 0 5px;
        gap: 7px;
        background: #ebebeb;
        border-bottom: 1px solid #d4d4d4;
    }

    .htrack { flex: 1; }

    .hthumb {
        width: 86%;
        height: 9px;
        border-radius: 5px;
        background: #b0b0b0;
    }

    footer {
        display: flex;
        align-items: center;
        flex: none;
        height: 28px;
    }

    .count { flex: 1; }

    .show-all {
        width: 33px;
        height: 23px;
        justify-content: center;
        background: #c8cacc;
        border: 1px solid #5ba6d3;
    }

    .show-selected { margin: 0 18px 0 11px; }
    .first { margin-right: 14px; }
    .errors .count { margin-left: 13px; }
    .fit { margin: 0 14px 0 8px; }

    input[type='range'] {
        appearance: none;
        width: 105px;
        height: 12px;
        margin: 0 7px;
        background: linear-gradient(#777, #777) left center / var(--fill) 3px no-repeat,
            linear-gradient(#ddd, #ddd) center / 100% 3px no-repeat;
    }

    input[type='range']::-webkit-slider-thumb {
        appearance: none;
        width: 3px;
        height: 12px;
        background: #555;
    }

    .percent {
        width: 62px;
        height: 22px;
        margin: 0 5px 0 8px;
        padding: 0 5px 0 6px;
    }

    .errors .tool { margin: 0 3px 0 5px; }

    .details {
        width: 413px;
        flex: none;
        display: flex;
        flex-direction: column;
    }

    .detail-tabs {
        height: 29px;
        padding-left: 7px;
        border-bottom: 1px solid #d4d4d4;
    }

    .detail-tabs button {
        height: 25px;
        border-bottom: 2px solid #1a80c4;
    }

    .detail-area {
        flex: 1;
        min-height: 0;
        display: flex;
        padding-left: 1px;
        border-bottom: 1px solid #d4d4d4;
    }

    .detail-clip {
        flex: 1;
        min-width: 0;
        overflow: hidden;
        border-left: 1px solid #ccc;
    }

    .detail-table { width: 100%; }

    .detail-table th {
        height: 24px;
        padding: 0 0 0 6px;
        background: #ebebeb;
        border-right-width: 1px;
        font-weight: 400;
        color: #333;
    }

    .detail-table th:first-child { width: 130px; }

    .detail-table td {
        height: 23px;
        padding: 0 0 0 1px;
        background: #fff;
        border-width: 0 1px 1px 0;
    }

    .detail-table td + td {
        padding-left: 4px;
        color: #999;
    }

    .detail-table tr:nth-child(even) td { background: #ebebeb; }
    .detail-scroll .thumb { height: 22px; margin-top: 6px; }
    .details .count { padding-left: 6px; }

    .nav-tool {
        width: 26px;
        height: 28px;
        justify-content: center;
    }

    .nav-tool.muted { background: #ededed; margin-right: 5px; }
    .nav-tool.muted svg { opacity: 0.45; }

    /* right-hand dock */
    .side {
        display: flex;
        flex-direction: column;
        gap: 10px;
    }

    .side button {
        writing-mode: vertical-rl;
        padding-left: 6px;
        border-right: 4px solid #c4c6c9;
    }
</style>
